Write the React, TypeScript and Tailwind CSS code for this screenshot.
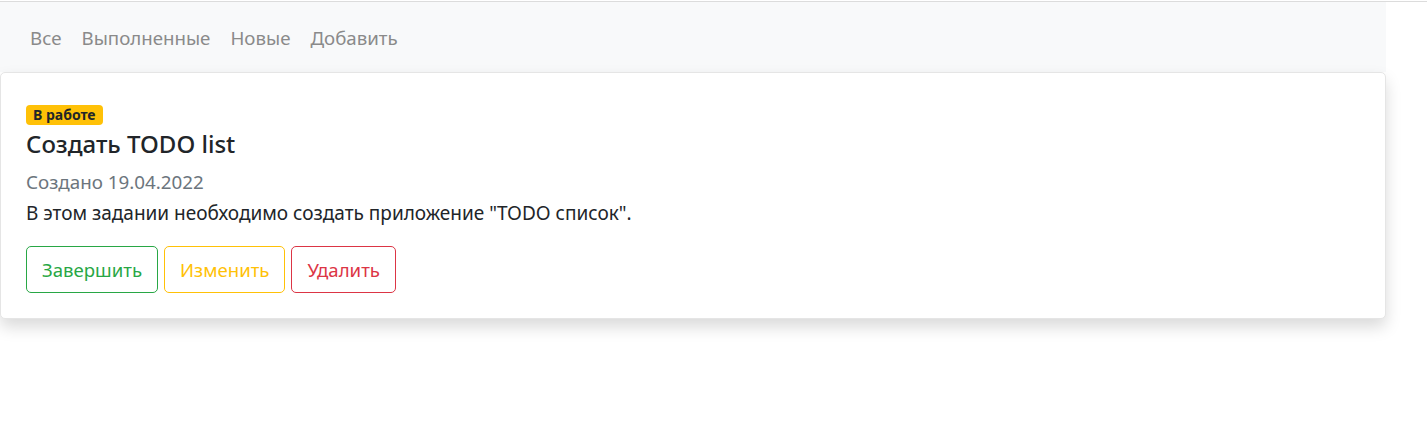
import React from 'react';

const links = ['Все', 'Выполненные', 'Новые', 'Добавить'];

export default function App() {
  return (
    <div className="min-h-[426px] bg-white font-['Noto_Sans',sans-serif] border-t border-[#dcdcdc] mt-px">
      <div className="w-[1386px]">
        <nav className="h-[70px] bg-[#f8f9fa] flex items-center pl-[30px] gap-[20px] pt-[2px]">
          {links.map((l) => (
            <a key={l} className="text-[18.7px] text-[#8a8a8a] leading-none cursor-pointer">
              {l}
            </a>
          ))}
        </nav>
        <div className="bg-white rounded-[5px] border border-[#e5e5e5] shadow-[0_8px_16px_rgba(0,0,0,0.15)] px-[25px] pt-[32px] pb-[25px]">
          <span className="block w-fit bg-[#ffc107] text-[#212529] text-[14px] font-bold leading-none px-[7px] py-[3px] rounded-[4px]">
            В работе
          </span>
          <h4 className="text-[24px] font-medium text-[#212529] leading-[28px] mt-[5px]">
            Создать TODO list
          </h4>
          <p className="text-[18.8px] text-[#6c757d] leading-[26px] mt-[11px]">Создано 19.04.2022</p>
          <p className="text-[19px] text-[#212529] leading-[26px] mt-[5px]">
            В этом задании необходимо создать приложение "TODO список".
          </p>
          <div className="flex gap-[6px] mt-[20px]">
            <button className="h-[47px] px-[15px] border border-[#28a745] text-[#28a745] rounded-[5px] text-[18.6px]">
              Завершить
            </button>
            <button className="h-[47px] px-[15px] border border-[#ffc107] text-[#ffc107] rounded-[5px] text-[18.6px]">
              Изменить
            </button>
            <button className="h-[47px] px-[15px] border border-[#dc3545] text-[#dc3545] rounded-[5px] text-[18.6px]">
              Удалить
            </button>
          </div>
        </div>
      </div>
    </div>
  );
}
